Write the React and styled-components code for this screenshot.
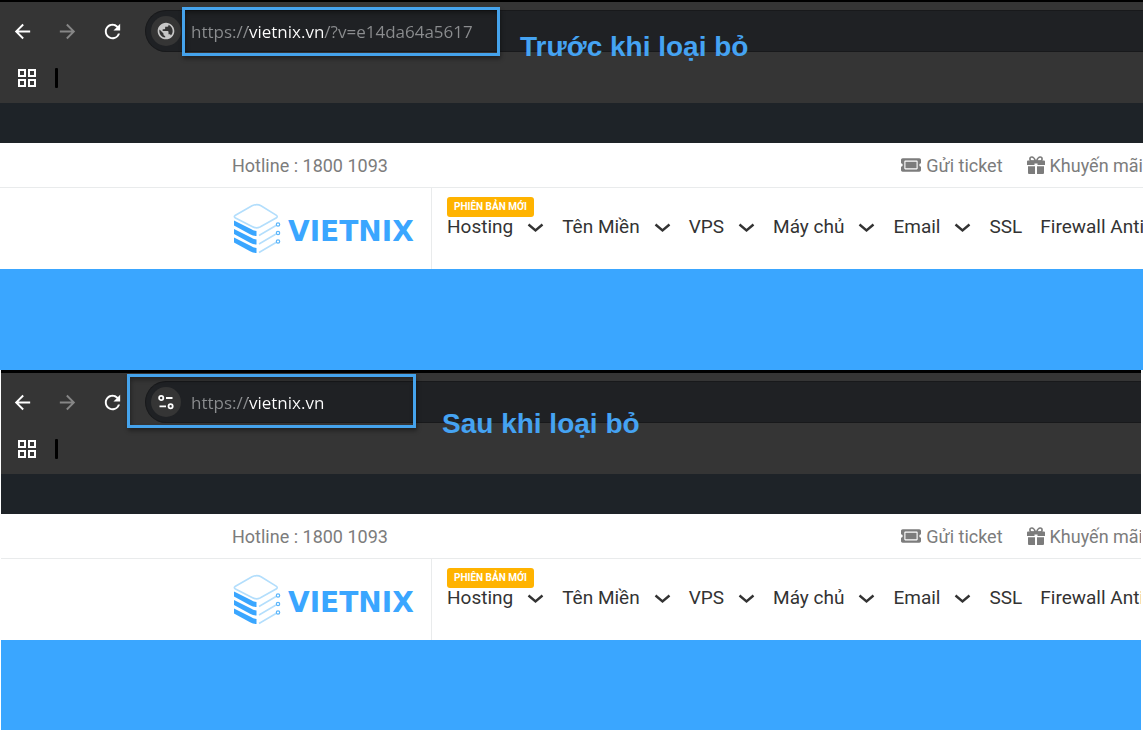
import React from 'react';
import styled, { createGlobalStyle } from 'styled-components';
import { MdArrowBack, MdArrowForward, MdRefresh, MdPublic } from 'react-icons/md';
import { FaTicketAlt } from 'react-icons/fa';

const GlobalStyle = createGlobalStyle`
  * {
    box-sizing: border-box;
  }
  body {
    margin: 0;
    background: #fff;
    font-family: Roboto, 'Liberation Sans', sans-serif;
  }
`;

const Page = styled.main`
  display: flex;
  flex-direction: column;
  height: 100vh;
  overflow: hidden;
`;

const Panel = styled.section`
  position: relative;
  display: flex;
  flex-direction: column;
  flex: ${(props) => (props.$grow ? '1 0 auto' : 'none')};
  clip-path: ${(props) => (props.$inset ? 'inset(0 2px 0 1px)' : 'none')};
`;

const Chrome = styled.div`
  background: #353535;
  border-top: ${(props) => props.$edge}px solid #000;
  padding-top: 8px;
`;

const Toolbar = styled.div`
  display: flex;
  align-items: center;
  padding-left: 10px;
`;

const ToolButton = styled.button`
  display: flex;
  align-items: center;
  justify-content: center;
  width: 24px;
  height: 24px;
  margin-right: 21px;
  padding: 0;
  border: 0;
  background: none;
  color: #fff;
  font-size: 23px;

  &:disabled {
    color: #868686;
  }
`;

const AddressBar = styled.form`
  display: flex;
  align-items: center;
  flex: 1;
  height: 42px;
  padding-left: 5px;
  border: 1px solid #18191b;
  border-right: 0;
  border-radius: 21px 0 0 21px;
  background: #1f2124;
`;

const SiteButton = styled.button`
  display: flex;
  align-items: center;
  justify-content: center;
  width: 30px;
  height: 30px;
  margin-right: 10px;
  padding: 0;
  border: 0;
  border-radius: 50%;
  background: #353535;
  color: #c7c7c7;
  font-size: 20px;
`;

const AddressInput = styled.input`
  flex: 1;
  min-width: 0;
  padding: 2px 0 0;
  border: 0;
  outline: 0;
  font: 17px/24px 'Open Sans', 'Noto Sans', sans-serif;
  color: #8b8d8f;
  background: linear-gradient(90deg, #8b8d8f 57px, #fff 57px, #fff 133px, #8b8d8f 133px);
  background-clip: text;
  -webkit-text-fill-color: transparent;
`;

const BookmarkBar = styled.div`
  display: flex;
  align-items: center;
  gap: 19px;
  height: 51px;
  padding-left: 18px;
`;

const AppsButton = styled.button`
  display: flex;
  padding: 0;
  border: 0;
  background: none;
`;

const Divider = styled.span`
  width: 3px;
  height: 20px;
  border-radius: 1px;
  background: #000;
`;

const DarkStrip = styled.div`
  height: 40px;
  background: #1e2328;
`;

const TopBar = styled.div`
  display: flex;
  align-items: center;
  justify-content: space-between;
  height: 45px;
  padding-left: 232px;
  border-bottom: 1px solid #e9ebec;
  color: #7c7c7c;
  font-size: 18px;
  white-space: nowrap;
`;

const TopLinks = styled.div`
  display: flex;
  gap: 24px;
`;

const TopLink = styled.a`
  display: flex;
  align-items: center;
  gap: 5px;
  color: inherit;
  text-decoration: none;
`;

const NavBar = styled.div`
  display: flex;
  height: 81px;
  padding-left: 232px;
`;

const Brand = styled.a`
  display: flex;
  align-items: center;
  flex: none;
  gap: 7px;
  width: 200px;
  border-right: 1px solid #e9ebec;
  color: #3aa6ff;
  text-decoration: none;
`;

const Wordmark = styled.span`
  padding-top: 5px;
  font: bold 28px 'DejaVu Sans', sans-serif;
`;

const Menu = styled.nav`
  display: flex;
  flex: 1;
  gap: 18px;
  min-width: 0;
  padding: 27px 0 0 15px;
  overflow: hidden;
`;

const MenuItem = styled.a`
  position: relative;
  display: flex;
  flex: none;
  gap: 14px;
  height: 24px;
  color: #333;
  font-size: 19px;
  line-height: 24px;
  text-decoration: none;
  white-space: nowrap;
`;

const NewBadge = styled.span`
  position: absolute;
  left: 0;
  bottom: 22px;
  padding: 0 7px;
  border-radius: 3px;
  background: #ffb300;
  color: #fff;
  font-size: 10px;
  font-weight: 700;
  line-height: 20px;
`;

const Hero = styled.div`
  flex: 1 0 101px;
  background: #3aa6ff;
`;

const Highlight = styled.div`
  position: absolute;
  top: ${(props) => props.$top}px;
  left: ${(props) => props.$left}px;
  width: ${(props) => props.$width}px;
  height: ${(props) => props.$height}px;
  border: 3px solid #45a3ec;
  box-shadow: 1px 3px 4px rgba(0, 0, 0, .35), inset 1px 3px 4px rgba(0, 0, 0, .35);
  pointer-events: none;
`;

const Caption = styled.p`
  position: absolute;
  top: ${(props) => props.$top}px;
  left: ${(props) => props.$left}px;
  margin: 0;
  color: #45a3f2;
  font: bold 28px/32px 'Liberation Sans', Arial, sans-serif;
  white-space: nowrap;
`;

const menu = [
  { label: 'Hosting', badge: 'PHIÊN BẢN MỚI', sub: true },
  { label: 'Tên Miền', sub: true },
  { label: 'VPS', sub: true },
  { label: 'Máy chủ', sub: true },
  { label: 'Email', sub: true },
  { label: 'SSL' },
  { label: 'Firewall Anti' },
];

function AppsIcon() {
  return (
    <svg width="18" height="18" viewBox="0 0 18 18" fill="none" stroke="#fff" strokeWidth="2">
      <path d="M1 1h6v6H1zM11 1h6v6h-6zM1 11h6v6H1zM11 11h6v6h-6z" />
    </svg>
  );
}

function TuneIcon() {
  return (
    <svg width="16" height="16" viewBox="0 0 16 16" fill="none" stroke="#fff" strokeWidth="1.8">
      <circle cx="3.2" cy="4" r="2.1" />
      <path d="M8 4h6.500M1.500 12.300h6.500" />
      <circle cx="12.6" cy="12.3" r="2.1" />
    </svg>
  );
}

function GiftIcon() {
  return (
    <svg width="18" height="18" viewBox="0 0 18 18" fill="currentColor">
      <path
        d="M8.500 5C7.500 2.400 6.400 1 4.900 1A2 2 0 0 0 4.900 5ZM9.500 5C10.500 2.400 11.600 1 13.100 1A2 2 0 0 1 13.100 5Z"
        fill="none"
        stroke="currentColor"
        strokeWidth="1.6"
      />
      <path d="M1 4.500H17Q18 4.500 18 5.500V9H10.500V7.500H7.500V9H0V5.500Q0 4.500 1 4.500Z" />
      <path d="M1 10.300H8V18H2Q1 18 1 17ZM10 10.300H17V17Q17 18 16 18H10Z" />
    </svg>
  );
}

function ChevronIcon() {
  return (
    <svg width="17" height="24" viewBox="0 0 17 24" fill="none" stroke="#333" strokeWidth="2.4">
      <path d="M1.5 9.5L8.5 15.500L15.5 9.5" />
    </svg>
  );
}

function LogoMark() {
  return (
    <svg width="49" height="52" viewBox="0 0 49 52" fill="none">
      <path
        d="M3 12.5L20 2.8Q25 .5 29 2.8L44.5 12.3Q46 13.5 44.5 14.8L28 24Q24 26 20 23.5L3.5 15Q1.5 13.8 3 12.5Z"
        stroke="#b3defc"
        strokeWidth="1.6"
      />
      <g fill="#3aa6ff">
        <path d="M2 17.500L19 26Q21 27.400 24.500 28V33Q21 33 18 31.200L2 22.500Z" />
        <path d="M2 26L19 34.500Q21 35.900 24.500 36.500V41.500Q21 41.500 18 39.700L2 31Z" />
        <path d="M2 34.500L19 43Q21 44.400 24.500 45V50Q21 50 18 48.200L2 39.500Z" />
      </g>
      <g stroke="#b3defc" strokeWidth="1.500">
        <path d="M27 32.500L44 22.500M27 41L44 31M27 49.500L44 39.500" />
      </g>
      <g stroke="#5cb6fb" strokeWidth="1.200">
        <circle cx="46" cy="21.500" r="1.700" />
        <circle cx="46" cy="30" r="1.700" />
        <circle cx="46" cy="38.500" r="1.700" />
      </g>
    </svg>
  );
}

function BrowserPanel(props) {
  const {
    url, siteIcon, edge, inset, grow, children,
  } = props;

  return (
    <Panel $inset={inset} $grow={grow}>
      <Chrome $edge={edge}>
        <Toolbar>
          <ToolButton type="button" aria-label="Back"><MdArrowBack /></ToolButton>
          <ToolButton type="button" aria-label="Forward" disabled><MdArrowForward /></ToolButton>
          <ToolButton type="button" aria-label="Reload"><MdRefresh /></ToolButton>
          <AddressBar>
            <SiteButton type="button" aria-label="Site information">{siteIcon}</SiteButton>
            <AddressInput type="text" aria-label="Address" defaultValue={url} spellCheck={false} />
          </AddressBar>
        </Toolbar>
        <BookmarkBar>
          <AppsButton type="button" aria-label="Apps"><AppsIcon /></AppsButton>
          <Divider />
        </BookmarkBar>
      </Chrome>
      <DarkStrip />
      <TopBar>
        <span>Hotline : 1800 1093</span>
        <TopLinks>
          <TopLink href="#ticket">
            <FaTicketAlt size={20} />
            Gửi ticket
          </TopLink>
          <TopLink href="#promo">
            <GiftIcon />
            Khuyến mãi
          </TopLink>
        </TopLinks>
      </TopBar>
      <NavBar>
        <Brand href="#home">
          <LogoMark />
          <Wordmark>VIETNIX</Wordmark>
        </Brand>
        <Menu>
          {menu.map((item) => (
            <MenuItem key={item.label} href="#menu">
              {item.badge && <NewBadge>{item.badge}</NewBadge>}
              {item.label}
              {item.sub && <ChevronIcon />}
            </MenuItem>
          ))}
        </Menu>
      </NavBar>
      <Hero />
      {children}
    </Panel>
  );
}

function App() {
  return (
    <>
      <GlobalStyle />
      <Page>
        <BrowserPanel url="https://vietnix.vn/?v=e14da64a5617" siteIcon={<MdPublic />} edge={2}>
          <Highlight $top={7} $left={182} $width={318} $height={49} />
          <Caption $top={31} $left={520}>Trước khi loại bỏ</Caption>
        </BrowserPanel>
        <BrowserPanel url="https://vietnix.vn" siteIcon={<TuneIcon />} edge={3} inset grow>
          <Highlight $top={4} $left={127} $width={289} $height={54} />
          <Caption $top={38} $left={442}>Sau khi loại bỏ</Caption>
        </BrowserPanel>
      </Page>
    </>
  );
}

export default App;
